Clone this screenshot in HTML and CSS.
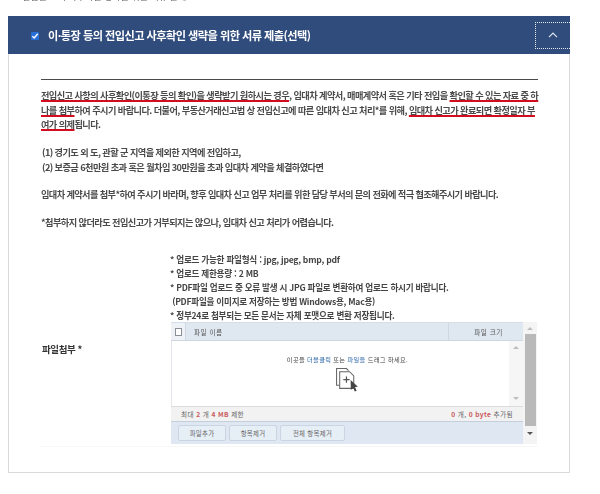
FILE: index.html
```html
<!DOCTYPE html>
<html lang="ko">
<head>
<meta charset="utf-8">
<title>서류 제출</title>
<link rel="stylesheet" href="styles.css">
</head>
<body>
<div class="cut"><p>전입신고 시 사후확인 생략을 위한 서류 안내</p></div>
<section class="card">
  <header class="card-head">
    <span class="check"><svg viewBox="0 0 8 8" width="8" height="8"><path d="M1.3 4.2 3.2 6 6.8 1.8" fill="none" stroke="#fff" stroke-width="1.4"/></svg></span>
    <h2>이·통장 등의 전입신고 사후확인 생략을 위한 서류 제출(선택)</h2>
    <button class="toggle" type="button"><svg viewBox="0 0 10 6" width="10" height="6"><path d="M1 5.2 5 1.2 9 5.2" fill="none" stroke="#dfe6f0" stroke-width="1.2"/></svg></button>
  </header>
  <div class="card-body">
    <div class="notice">
      <p class="lines tight"><u>전입신고 사항의 사후확인(이통장 등의 확인)을 생략받기 원하시는 경우</u>, 임대차 계약서, 매매계약서 혹은 기타 전입을 <u>확인할 수 있는 자료 중 하</u><br><u>나를 첨부</u>하여 주시기 바랍니다. 더불어, 부동산거래신고법 상 전입신고에 따른 임대차 신고 처리*를 위해, <u>임대차 신고가 완료되면 확정일자 부</u><br><u>여가 의제</u>됩니다.</p>
      <p class="lines gap tight">(1) 경기도 외 도, 관할 군 지역을 제외한 지역에 전입하고,<br>(2) 보증금 6천만원 초과 혹은 월차임 30만원을 초과 임대차 계약을 체결하였다면</p>
      <p class="lines gap-lg tighter">임대차 계약서를 첨부*하여 주시기 바라며, 향후 임대차 신고 업무 처리를 위한 담당 부서의 문의 전화에 적극 협조해주시기 바랍니다.</p>
      <p class="lines gap-lg tight">*첨부하지 않더라도 전입신고가 거부되지는 않으나, 임대차 신고 처리가 어렵습니다.</p>
    </div>
    <div class="attach">
      <div class="attach-label">파일첨부 *</div>
      <div class="attach-main">
        <ul class="rules">
          <li>* 업로드 가능한 파일형식 : jpg, jpeg, bmp, pdf</li>
          <li>* 업로드 제한용량 : 2 MB</li>
          <li>* PDF파일 업로드 중 오류 발생 시 JPG 파일로 변환하여 업로드 하시기 바랍니다.</li>
          <li>&nbsp;(PDF파일을 이미지로 저장하는 방법 Windows용, Mac용)</li>
          <li>* 정부24로 첨부되는 모든 문서는 자체 포맷으로 변환 저장됩니다.</li>
        </ul>
        <div class="uploader">
          <div class="up-main">
            <div class="up-head">
              <div class="up-checkcell"><span class="up-box"></span></div>
              <div class="up-name">파일 이름</div>
              <div class="up-size">파일 크기</div>
            </div>
            <div class="up-drop">
              <div class="up-center">
                <p>이곳을 <b>더블클릭</b> 또는 <b>파일을</b> 드래그 하세요.</p>
                <svg class="up-icon" viewBox="0 0 24 24" width="25" height="25">
                  <path d="M4.5 17.5H1.5V1.5H11L13 3.5" fill="none" stroke="#666" stroke-width="1"/>
                  <path d="M4.5 4.5H14L18 8.5V20.5H4.5Z" fill="#fff" stroke="#666" stroke-width="1"/>
                  <path d="M11 9V15M8 12H14" stroke="#555" stroke-width="1.2"/>
                  <path d="M15 12.5 15.2 22 17.4 20 19 23.5 20.8 22.7 19.2 19.3 22 19Z" fill="#444"/>
                </svg>
              </div>
              <div class="up-inner-bar"><i class="arrow-up"></i><i class="arrow-down"></i></div>
            </div>
            <div class="up-status">
              <span>최대 <em>2</em> 개 <em>4 MB</em> 제한</span>
              <span><em>0</em> 개, <em>0 byte</em> 추가됨</span>
            </div>
            <div class="up-actions">
              <button type="button">파일추가</button>
              <button type="button">항목제거</button>
              <button type="button" class="wide">전체 항목제거</button>
            </div>
          </div>
          <div class="up-scroll"><i class="arrow-up"></i><span class="thumb"></span><i class="arrow-down dark"></i></div>
        </div>
      </div>
    </div>
    <div class="faint"></div>
  </div>
</section>
</body>
</html>
```
FILE: styles.css
```css
* { box-sizing: border-box; }
html, body { margin: 0; padding: 0; }
body {
  width: 600px;
  height: 494px;
  overflow: hidden;
  background: #fff;
  color: #3a3a3a;
  font-family: "Noto Sans CJK KR", "Noto Sans", sans-serif;
  filter: blur(0.45px);
}
.cut { height: 3px; margin-left: 22px; overflow: hidden; display: flex; align-items: flex-end; }
.cut p { margin: 0; font-size: 9px; line-height: 12px; color: #666; white-space: nowrap; }
.card { width: 562px; margin: 13px 0 0 8px; }
.card-head {
  height: 38px;
  background: #2f4c7c;
  display: flex;
  align-items: center;
  padding-left: 23px;
  color: #fff;
}
.check {
  width: 8px; height: 8px; background: #2a6fd6; border-radius: 1px;
  display: flex; margin-right: 9px; margin-top: 2px;
}
.card-head h2 { margin: 0; font-size: 11.2px; font-weight: 700; letter-spacing: -0.55px; white-space: nowrap; }
.toggle {
  margin-left: auto; width: 35px; height: 27px; padding: 0;
  background: transparent; border: 1px dotted #e6ebf3; border-right: 0;
  display: flex; align-items: center; justify-content: center;
}
.card-body {
  height: 419px;
  border: 1px solid #d9d9d9;
  border-top: 0;
  padding: 25px 31px 0 32px;
}
.notice { border-top: 1px solid #4a4a4a; padding-top: 8px; }
.lines {
  margin: 0;
  font-size: 9.2px;
  line-height: 14.5px;
  font-weight: 700;
  letter-spacing: -0.44px;
  white-space: nowrap;
  color: #4a4a4a;
}
.tight { letter-spacing: -0.58px; }
.tighter { letter-spacing: -0.62px; }
.lines u {
  text-decoration: underline #d40d1e 2px;
  text-underline-offset: 1px;
  text-decoration-skip-ink: none;
}
.gap { margin-top: 13.5px; margin-left: 1px; }
.gap-lg { margin-top: 13px; }
.attach { display: flex; margin-top: 23px; margin-left: 1px; }
.attach-label { width: 128px; padding-top: 90px; font-size: 9.5px; font-weight: 700; letter-spacing: -0.4px; color: #333; }
.attach-main { width: 368px; }
.rules { list-style: none; margin: 0; padding: 0; font-size: 8.6px; line-height: 14px; font-weight: 700; letter-spacing: -0.26px; white-space: nowrap; color: #444; }
.uploader { display: flex; width: 366px; height: 122px; margin-left: 1px; }
.up-main { width: 352px; display: flex; flex-direction: column; font-size: 6.6px; color: #666; }
.up-head { height: 19px; background: #dfe8f1; display: flex; align-items: center; border-bottom: 1px solid #cfd8e2; border-top: 1px solid #d5dee8; }
.up-checkcell { width: 15px; height: 100%; border-right: 1px solid #cfd8e2; display: flex; align-items: center; justify-content: center; background: #eef2f6; }
.up-box { width: 7px; height: 8px; background: #fff; border: 1px solid #8a8f96; }
.up-name { flex: 1; padding-left: 8px; letter-spacing: 0.5px; color: #555; }
.up-size { width: 75px; height: 100%; border-left: 1px solid #cfd8e2; padding-left: 5px; display: flex; align-items: center; justify-content: center; letter-spacing: 0.5px; color: #555; }
.up-drop { height: 65px; display: flex; background: #fff; border-left: 1px solid #e3e7ec; }
.up-center { flex: 1; text-align: center; padding: 14px 0 0 14px; }
.up-center p { margin: 0 0 2px; line-height: 10px; font-size: 6.2px; letter-spacing: 0.35px; color: #444; }
.up-center b { font-weight: 400; color: #2f6aa8; }
.up-icon { display: block; margin: 0 auto; }
.up-inner-bar { width: 14px; background: #f6f6f6; display: flex; flex-direction: column; justify-content: space-between; align-items: center; padding: 5px 0 6px; }
.arrow-up, .arrow-down { display: block; width: 0; height: 0; border-left: 3px solid transparent; border-right: 3px solid transparent; }
.arrow-up { border-bottom: 3px solid #bdbdbd; }
.arrow-down { border-top: 3px solid #bdbdbd; }
.arrow-down.dark { border-top-color: #555; }
.up-status { height: 16px; display: flex; justify-content: space-between; align-items: center; padding: 0 10px; background: #f2f2f2; border-top: 1px solid #dcdcdc; border-bottom: 1px solid #c3cfdb; color: #666; letter-spacing: 0.4px; }
.up-status em { font-style: normal; font-weight: 700; color: #c9595a; }
.up-actions { flex: 1; background: #dfe8f2; display: flex; align-items: center; gap: 3px; padding-left: 7px; }
.up-actions button { width: 48px; height: 16px; padding: 0; font: inherit; font-size: 6.4px; letter-spacing: 0.3px; color: #666; background: #e6eef6; border: 1px solid #c9d5e2; border-radius: 2px; }
.up-actions .wide { width: 65px; }
.up-scroll { width: 14px; background: #f4f4f4; display: flex; flex-direction: column; align-items: center; padding-top: 5px; }
.up-scroll .thumb { width: 11px; height: 92px; background: #b9b9b9; margin: 4px 0 6px; }
.faint { height: 1px; background: #f7f7f7; margin-top: 2px; }
```
